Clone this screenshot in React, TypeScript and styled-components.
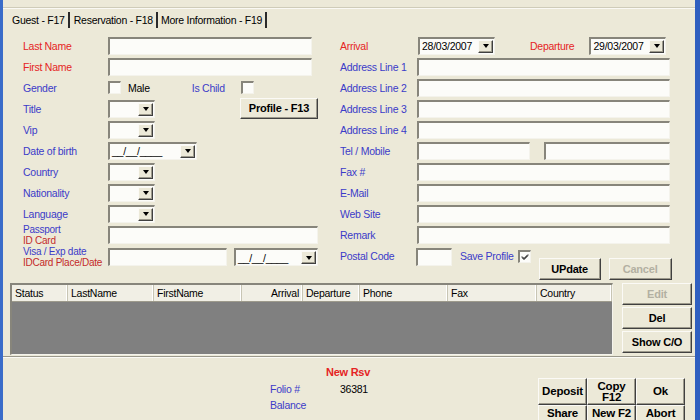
import React, { type FC, type ReactNode } from "react";
import styled, { createGlobalStyle, css } from "styled-components";

const BLUE = "#3b3bc8";
const RED = "#e52424";

const GlobalStyle = createGlobalStyle`
  html, body {
    margin: 0;
    padding: 0;
    background: #ece9d8;
  }
  body {
    font-family: "Liberation Sans", Arial, sans-serif;
    font-size: 10.5px;
    letter-spacing: -0.25px;
    color: #000;
  }
`;

const sunken = css`
  box-sizing: border-box;
  background: #fcfcf9;
  border-top: 2px solid #87857b;
  border-left: 2px solid #87857b;
  border-right: 1px solid #f4f3ec;
  border-bottom: 1px solid #f4f3ec;
`;

const raised = css`
  box-sizing: border-box;
  background: #ece9d8;
  border: 1px solid;
  border-color: #fbfaf6 #404040 #404040 #fbfaf6;
  box-shadow: inset -1px -1px #9d9a8c;
`;

const Frame = styled.div`
  box-sizing: border-box;
  width: 700px;
  height: 420px;
  overflow: hidden;
  border-left: 3px solid #3a6cc9;
  border-right: 5px solid #2f5fc0;
  display: flex;
  flex-direction: column;
  & > * {
    flex-shrink: 0;
  }
`;

const TopStrip = styled.div`
  height: 7px;
  border-bottom: 1px solid #cfccb9;
  box-shadow: 0 1px #faf9f4;
`;

const TabStrip = styled.div`
  height: 20px;
  display: flex;
  align-items: flex-end;
  padding-left: 9px;
`;

const Tab = styled.div`
  height: 16px;
  line-height: 16px;
  padding: 0 3px 0 0;
  margin-right: 3px;
  border-right: 2px solid #2a2a2a;
  white-space: nowrap;
  &:first-child {
    margin-right: 4px;
  }
`;

const Form = styled.div`
  display: grid;
  grid-template-columns: 295px 330px;
  column-gap: 22px;
  padding: 7px 0 0 20px;
`;

const Column = styled.div`
  display: flex;
  flex-direction: column;
`;

const Row = styled.div<{ $h?: number; $top?: boolean }>`
  display: flex;
  align-items: ${({ $top }) => ($top ? "flex-start" : "center")};
  height: ${({ $h }) => $h ?? 21}px;
`;

const Label = styled.span<{ $w?: number; $red?: boolean }>`
  width: ${({ $w }) => $w ?? 85}px;
  flex: none;
  color: ${({ $red }) => ($red ? RED : BLUE)};
  white-space: nowrap;
`;

const StackLabel = styled.div`
  width: 85px;
  flex: none;
  display: flex;
  flex-direction: column;
  font-size: 10px;
  line-height: 11px;
  white-space: nowrap;
`;

const Line = styled.span<{ $red?: boolean }>`
  color: ${({ $red }) => ($red ? "#c42a2a" : BLUE)};
`;

const TextBox = styled.div<{ $w: number; $ml?: number }>`
  ${sunken};
  width: ${({ $w }) => $w}px;
  height: 18px;
  margin-left: ${({ $ml }) => $ml ?? 0}px;
  flex: none;
`;

const ComboBox = styled.div<{ $w: number; $ml?: number }>`
  ${sunken};
  width: ${({ $w }) => $w}px;
  height: 18px;
  margin-left: ${({ $ml }) => $ml ?? 0}px;
  flex: none;
  display: flex;
  align-items: center;
  justify-content: space-between;
  padding-left: 2px;
  padding-right: 1px;
  font-size: 10.5px;
`;

const DropButton = styled.span`
  ${raised};
  width: 15px;
  height: 13px;
  display: flex;
  align-items: center;
  justify-content: center;
  &::after {
    content: "";
    width: 0;
    height: 0;
    border-left: 3px solid transparent;
    border-right: 3px solid transparent;
    border-top: 4px solid #000;
  }
`;

const Check = styled.span<{ $ml?: number }>`
  ${sunken};
  width: 13px;
  height: 13px;
  margin-left: ${({ $ml }) => $ml ?? 0}px;
  flex: none;
  display: flex;
  align-items: center;
  justify-content: center;
`;

const Plain = styled.span<{ $ml?: number; $red?: boolean; $blue?: boolean }>`
  margin-left: ${({ $ml }) => $ml ?? 0}px;
  color: ${({ $red, $blue }) => ($red ? RED : $blue ? BLUE : "#000")};
  white-space: nowrap;
`;

const Button = styled.button<{ $w?: number; $h?: number; $ml?: number; $mt?: number }>`
  ${raised};
  width: ${({ $w }) => ($w ? `${$w}px` : "auto")};
  height: ${({ $h }) => $h ?? 22}px;
  margin-left: ${({ $ml }) => $ml ?? 0}px;
  margin-top: ${({ $mt }) => $mt ?? 0}px;
  flex: none;
  padding: 0;
  font-family: "Liberation Sans", Arial, sans-serif;
  font-size: 11px;
  font-weight: bold;
  letter-spacing: -0.2px;
  line-height: 11px;
  color: #000;
  &:disabled {
    color: #b3b0a2;
  }
`;

const PadButton = styled(Button)<{ $tall?: boolean }>`
  font-size: 11.5px;
  align-self: stretch;
  display: flex;
  flex-direction: column;
  align-items: center;
  justify-content: ${({ $tall }) => ($tall ? "flex-start" : "center")};
  padding-top: ${({ $tall }) => ($tall ? 2 : 0)}px;
  height: auto;
`;

const ListSection = styled.div`
  display: flex;
  align-items: flex-start;
  padding-left: 7px;
  margin-top: 3px;
`;

const ListView = styled.div`
  box-sizing: border-box;
  width: 603px;
  height: 72px;
  border-top: 2px solid #87857b;
  border-left: 2px solid #87857b;
  border-right: 1px solid #f4f3ec;
  border-bottom: 1px solid #f4f3ec;
  background: #808080;
`;

const ListHeader = styled.div`
  display: grid;
  grid-template-columns: 56px 86px 88px 61px 57px 88px 89px 75px;
  height: 16px;
  background: #f1efe5;
  border-bottom: 1px solid #9d9a8c;
`;

const HeaderCell = styled.div<{ $right?: boolean }>`
  padding: 0 3px;
  line-height: 16px;
  text-align: ${({ $right }) => ($right ? "right" : "left")};
  border-right: 1px solid #c8c5b4;
  box-shadow: inset -1px 0 #fff;
  white-space: nowrap;
  overflow: hidden;
`;

const SideButtons = styled.div`
  margin-left: 9px;
  display: flex;
  flex-direction: column;
  gap: 2px;
`;

const BottomPanel = styled.div`
  flex: 1 0 auto;
  margin-top: 1px;
  border-top: 1px solid #9a988c;
  box-shadow: inset 0 1px #fbfaf5;
  display: flex;
  padding-left: 267px;
`;

const Info = styled.div`
  width: 268px;
  padding-top: 9px;
`;

const InfoTitle = styled.div`
  padding-left: 56px;
  margin-bottom: 3px;
  color: ${RED};
  font-weight: bold;
  font-size: 11px;
  line-height: 12px;
`;

const InfoRow = styled.div`
  display: grid;
  grid-template-columns: 70px auto;
  line-height: 16px;
`;

const ButtonPad = styled.div`
  margin-top: 21px;
  display: grid;
  grid-template-columns: repeat(3, 49px);
  grid-auto-rows: 27px;
`;

const Combo: FC<{ w: number; ml?: number; children?: ReactNode }> = ({ w, ml, children }) => (
  <ComboBox $w={w} $ml={ml}>
    <span>{children}</span>
    <DropButton />
  </ComboBox>
);

const CheckMark = () => (
  <svg width="8" height="8" viewBox="0 0 8 8">
    <path d="M1 3.5 L3 5.5 L7 1.5 M1 4.5 L3 6.5 L7 2.5" stroke="#000" strokeWidth="1" fill="none" />
  </svg>
);

const columns = [
  { name: "Status" },
  { name: "LastName" },
  { name: "FirstName" },
  { name: "Arrival", right: true },
  { name: "Departure" },
  { name: "Phone" },
  { name: "Fax" },
  { name: "Country" },
];

export default function App() {
  return (
    <Frame>
      <GlobalStyle />
      <TopStrip />
      <TabStrip>
        <Tab>Guest - F17</Tab>
        <Tab>Reservation - F18</Tab>
        <Tab>More Information - F19</Tab>
      </TabStrip>

      <Form>
        <Column>
          <Row>
            <Label $red>Last Name</Label>
            <TextBox $w={204} />
          </Row>
          <Row>
            <Label $red>First Name</Label>
            <TextBox $w={204} />
          </Row>
          <Row>
            <Label>Gender</Label>
            <Check />
            <Plain $ml={7}>Male</Plain>
            <Plain $ml={42} $blue>Is Child</Plain>
            <Check $ml={16} />
          </Row>
          <Row>
            <Label>Title</Label>
            <Combo w={47} />
            <Button $w={78} $h={21} $ml={85}>Profile - F13</Button>
          </Row>
          <Row>
            <Label>Vip</Label>
            <Combo w={47} />
          </Row>
          <Row>
            <Label>Date of birth</Label>
            <Combo w={89}>__/__/____</Combo>
          </Row>
          <Row>
            <Label>Country</Label>
            <Combo w={47} />
          </Row>
          <Row>
            <Label>Nationality</Label>
            <Combo w={47} />
          </Row>
          <Row>
            <Label>Language</Label>
            <Combo w={47} />
          </Row>
          <Row $h={22}>
            <StackLabel>
              <Line>Passport</Line>
              <Line $red>ID Card</Line>
            </StackLabel>
            <TextBox $w={210} />
          </Row>
          <Row $h={22}>
            <StackLabel>
              <Line>Visa / Exp date</Line>
              <Line $red>IDCard Place/Date</Line>
            </StackLabel>
            <TextBox $w={119} />
            <Combo w={84} ml={7}>__/__/____</Combo>
          </Row>
        </Column>

        <Column>
          <Row>
            <Label $w={78} $red>Arrival</Label>
            <Combo w={77}>28/03/2007</Combo>
            <Plain $ml={35} $red>Departure</Plain>
            <Combo w={77} ml={15}>29/03/2007</Combo>
          </Row>
          {[1, 2, 3, 4].map((n) => (
            <Row key={n}>
              <Label $w={77}>Address Line {n}</Label>
              <TextBox $w={253} />
            </Row>
          ))}
          <Row>
            <Label $w={77}>Tel / Mobile</Label>
            <TextBox $w={113} />
            <TextBox $w={126} $ml={14} />
          </Row>
          <Row>
            <Label $w={77}>Fax #</Label>
            <TextBox $w={253} />
          </Row>
          <Row>
            <Label $w={77}>E-Mail</Label>
            <TextBox $w={253} />
          </Row>
          <Row>
            <Label $w={77}>Web Site</Label>
            <TextBox $w={253} />
          </Row>
          <Row $h={22}>
            <Label $w={77}>Remark</Label>
            <TextBox $w={253} />
          </Row>
          <Row $h={34} $top>
            <Label $w={76} style={{ lineHeight: "21px" }}>Postal Code</Label>
            <TextBox $w={36} style={{ marginTop: 2 }} />
            <Plain $ml={8} $blue style={{ lineHeight: "21px" }}>Save Profile</Plain>
            <Check $ml={4} style={{ marginTop: 4 }}>
              <CheckMark />
            </Check>
            <Button $w={62} $ml={8} $mt={12}>UPdate</Button>
            <Button $w={63} $ml={8} $mt={12} disabled>Cancel</Button>
          </Row>
        </Column>
      </Form>

      <ListSection>
        <ListView>
          <ListHeader>
            {columns.map((c) => (
              <HeaderCell key={c.name} $right={c.right}>
                {c.name}
              </HeaderCell>
            ))}
          </ListHeader>
        </ListView>
        <SideButtons>
          <Button $w={70} disabled>Edit</Button>
          <Button $w={70}>Del</Button>
          <Button $w={70}>Show C/O</Button>
        </SideButtons>
      </ListSection>

      <BottomPanel>
        <Info>
          <InfoTitle>New Rsv</InfoTitle>
          <InfoRow>
            <Plain $blue>Folio #</Plain>
            <span>36381</span>
          </InfoRow>
          <InfoRow>
            <Plain $blue>Balance</Plain>
            <span />
          </InfoRow>
        </Info>
        <ButtonPad>
          <PadButton>Deposit</PadButton>
          <PadButton>
            <span>Copy</span>
            <span>F12</span>
          </PadButton>
          <PadButton>Ok</PadButton>
          <PadButton $tall>Share</PadButton>
          <PadButton $tall>New F2</PadButton>
          <PadButton $tall>Abort</PadButton>
        </ButtonPad>
      </BottomPanel>
    </Frame>
  );
}
